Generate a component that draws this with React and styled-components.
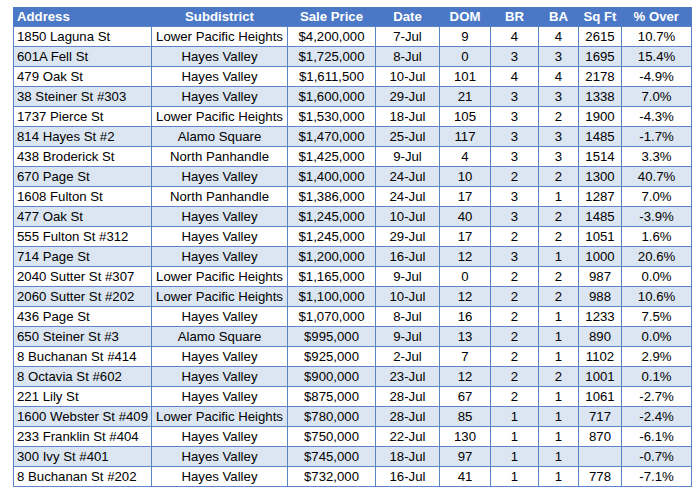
import React from 'react';
import styled, { createGlobalStyle } from 'styled-components';

const GlobalStyle = createGlobalStyle`
  body {
    margin: 0;
    background: #fff;
    font-family: "Liberation Sans", Arial, sans-serif;
  }
`;

const columns = [
  { key: 'address', label: 'Address', width: 138, align: 'left' },
  { key: 'sub', label: 'Subdistrict', width: 136 },
  { key: 'price', label: 'Sale Price', width: 88 },
  { key: 'date', label: 'Date', width: 64 },
  { key: 'dom', label: 'DOM', width: 51 },
  { key: 'br', label: 'BR', width: 48 },
  { key: 'ba', label: 'BA', width: 40 },
  { key: 'sqft', label: 'Sq Ft', width: 43 },
  { key: 'over', label: '% Over', width: 70 },
];

const rows = [
  ['1850 Laguna St', 'Lower Pacific Heights', '$4,200,000', '7-Jul', '9', '4', '4', '2615', '10.7%'],
  ['601A Fell St', 'Hayes Valley', '$1,725,000', '8-Jul', '0', '3', '3', '1695', '15.4%'],
  ['479 Oak St', 'Hayes Valley', '$1,611,500', '10-Jul', '101', '4', '4', '2178', '-4.9%'],
  ['38 Steiner St #303', 'Hayes Valley', '$1,600,000', '29-Jul', '21', '3', '3', '1338', '7.0%'],
  ['1737 Pierce St', 'Lower Pacific Heights', '$1,530,000', '18-Jul', '105', '3', '2', '1900', '-4.3%'],
  ['814 Hayes St #2', 'Alamo Square', '$1,470,000', '25-Jul', '117', '3', '3', '1485', '-1.7%'],
  ['438 Broderick St', 'North Panhandle', '$1,425,000', '9-Jul', '4', '3', '3', '1514', '3.3%'],
  ['670 Page St', 'Hayes Valley', '$1,400,000', '24-Jul', '10', '2', '2', '1300', '40.7%'],
  ['1608 Fulton St', 'North Panhandle', '$1,386,000', '24-Jul', '17', '3', '1', '1287', '7.0%'],
  ['477 Oak St', 'Hayes Valley', '$1,245,000', '10-Jul', '40', '3', '2', '1485', '-3.9%'],
  ['555 Fulton St #312', 'Hayes Valley', '$1,245,000', '29-Jul', '17', '2', '2', '1051', '1.6%'],
  ['714 Page St', 'Hayes Valley', '$1,200,000', '16-Jul', '12', '3', '1', '1000', '20.6%'],
  ['2040 Sutter St #307', 'Lower Pacific Heights', '$1,165,000', '9-Jul', '0', '2', '2', '987', '0.0%'],
  ['2060 Sutter St #202', 'Lower Pacific Heights', '$1,100,000', '10-Jul', '12', '2', '2', '988', '10.6%'],
  ['436 Page St', 'Hayes Valley', '$1,070,000', '8-Jul', '16', '2', '1', '1233', '7.5%'],
  ['650 Steiner St #3', 'Alamo Square', '$995,000', '9-Jul', '13', '2', '1', '890', '0.0%'],
  ['8 Buchanan St #414', 'Hayes Valley', '$925,000', '2-Jul', '7', '2', '1', '1102', '2.9%'],
  ['8 Octavia St #602', 'Hayes Valley', '$900,000', '23-Jul', '12', '2', '2', '1001', '0.1%'],
  ['221 Lily St', 'Hayes Valley', '$875,000', '28-Jul', '67', '2', '1', '1061', '-2.7%'],
  ['1600 Webster St #409', 'Lower Pacific Heights', '$780,000', '28-Jul', '85', '1', '1', '717', '-2.4%'],
  ['233 Franklin St #404', 'Hayes Valley', '$750,000', '22-Jul', '130', '1', '1', '870', '-6.1%'],
  ['300 Ivy St #401', 'Hayes Valley', '$745,000', '18-Jul', '97', '1', '1', '', '-0.7%'],
  ['8 Buchanan St #202', 'Hayes Valley', '$732,000', '16-Jul', '41', '1', '1', '778', '-7.1%'],
];

const Page = styled.div`
  padding: 7px 0 0 13px;
`;

const Sheet = styled.table`
  border-collapse: collapse;
  table-layout: fixed;
  width: 679px;
  border: 1px solid #4f7bc4;
  font-size: 13.2px;
  color: #000;
`;

const HeadRow = styled.tr`
  height: 19px;
  background: #4a78c6;
`;

const HeadCell = styled.th`
  padding: 0 3px;
  font-weight: bold;
  color: #fff;
  text-align: ${(p) => p.$align || 'center'};
  white-space: nowrap;
  line-height: 18px;
`;

const Row = styled.tr`
  height: 20px;
  background: ${(p) => (p.$band ? '#dce6f2' : '#fff')};
`;

const Cell = styled.td`
  padding: 0 3px;
  border: 1px solid #5b84c8;
  text-align: ${(p) => p.$align || 'center'};
  white-space: nowrap;
  overflow: hidden;
  line-height: 18px;
`;

export default function App() {
  return (
    <Page>
      <GlobalStyle />
      <Sheet>
        <colgroup>
          {columns.map((c) => (
            <col key={c.key} style={{ width: c.width }} />
          ))}
        </colgroup>
        <thead>
          <HeadRow>
            {columns.map((c) => (
              <HeadCell key={c.key} $align={c.align}>
                {c.label}
              </HeadCell>
            ))}
          </HeadRow>
        </thead>
        <tbody>
          {rows.map((r, i) => (
            <Row key={i} $band={i % 2 === 1}>
              {r.map((v, j) => (
                <Cell key={j} $align={columns[j].align}>
                  {v}
                </Cell>
              ))}
            </Row>
          ))}
        </tbody>
      </Sheet>
    </Page>
  );
}
